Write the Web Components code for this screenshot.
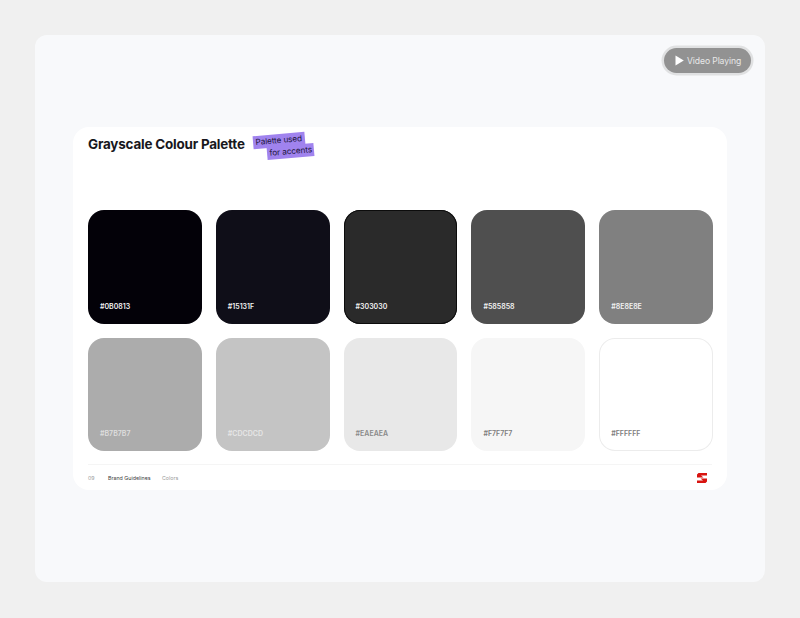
<!DOCTYPE html>
<html>
<head>
<meta charset="utf-8">
<style>
  html, body { margin: 0; height: 100%; background: #f0f0f0; }
  body { font-family: "Inter", "Liberation Sans", sans-serif; }
</style>
</head>
<body>
<guide-slide>
  <video-pill slot="top">Video Playing</video-pill>
  <palette-card>
    <span slot="title">Grayscale Colour Palette</span>
    <accent-note slot="note"></accent-note>
    <color-swatch color="#030108" label="#0B0813" ink="#f2f2f2"></color-swatch>
    <color-swatch color="#0f0e18" label="#15131F" ink="#f2f2f2"></color-swatch>
    <color-swatch color="#2a2a2a" label="#303030" ink="#f2f2f2" edge="#0c0c0c"></color-swatch>
    <color-swatch color="#4f4f4f" label="#585858" ink="#f2f2f2"></color-swatch>
    <color-swatch color="#808080" label="#8E8E8E" ink="#f2f2f2"></color-swatch>
    <color-swatch color="#acacac" label="#B7B7B7" ink="#dedede"></color-swatch>
    <color-swatch color="#c4c4c4" label="#CDCDCD" ink="#e6e6e6"></color-swatch>
    <color-swatch color="#e8e8e8" label="#EAEAEA" ink="#8a8a8a"></color-swatch>
    <color-swatch color="#f6f6f6" label="#F7F7F7" ink="#7d7d7d"></color-swatch>
    <color-swatch color="#ffffff" label="#FFFFFF" ink="#7d7d7d" edge="#ececec"></color-swatch>
    <card-footer slot="footer"></card-footer>
  </palette-card>
</guide-slide>

<script>
class GuideSlide extends HTMLElement {
  constructor() {
    super()
    this.attachShadow({ mode: 'open' }).innerHTML = `
      <style>
        :host { display: block; box-sizing: border-box; width: 800px; height: 618px; padding: 35px; }
        .panel {
          box-sizing: border-box; height: 547px; padding: 13px 14px 0 38px;
          background: #f8f9fb; border-radius: 12px;
          display: flex; flex-direction: column;
        }
        .top { display: flex; justify-content: flex-end; height: 79px; }
        .content { padding-right: 24px; }
      </style>
      <div class="panel">
        <div class="top"><slot name="top"></slot></div>
        <div class="content"><slot></slot></div>
      </div>`
  }
}

class VideoPill extends HTMLElement {
  constructor() {
    super()
    this.attachShadow({ mode: 'open' }).innerHTML = `
      <style>
        :host {
          display: flex; align-items: center; gap: 3px; box-sizing: border-box;
          height: 25px; width: 87px; padding-left: 11px;
          background: #929292; border-radius: 13px; color: #e8e8e8;
          font-size: 8.6px; letter-spacing: -0.1px;
          box-shadow: 0 0 0 2.5px #e0e1e2;
        }
        svg { display: block; flex: none; }
      </style>
      <svg width="9" height="11" viewBox="0 0 9 11"><path d="M0.5 0.5 L8.8 5.5 L0.5 10.5 Z" fill="#fff"/></svg>
      <slot></slot>`
  }
}

class PaletteCard extends HTMLElement {
  constructor() {
    super()
    this.attachShadow({ mode: 'open' }).innerHTML = `
      <style>
        :host { display: block; box-sizing: border-box; width: 654px; height: 363px; background: #fff; border-radius: 16px; padding: 0 15px; }
        header { display: flex; align-items: flex-start; gap: 8px; height: 83px; padding-top: 7px; box-sizing: border-box; }
        .title { font-size: 13.45px; font-weight: 700; letter-spacing: -0.2px; line-height: 20px; color: #17171c; white-space: nowrap; }
        .grid { display: grid; grid-template-columns: repeat(5, 113.8px); grid-auto-rows: 113.6px; column-gap: 14px; row-gap: 14px; }
      </style>
      <header>
        <div class="title"><slot name="title"></slot></div>
        <slot name="note"></slot>
      </header>
      <div class="grid"><slot></slot></div>
      <slot name="footer"></slot>`
  }
}

class AccentNote extends HTMLElement {
  constructor() {
    super()
    this.attachShadow({ mode: 'open' }).innerHTML = `
      <style>
        :host { display: block; width: 64px; font-size: 8.2px; letter-spacing: -0.1px; color: #1d1640; }
        span { display: block; width: max-content; background: #a083ee; padding: 0 2.5px; height: 13px; line-height: 13px; transform: rotate(-5deg); }
        .b { margin-left: 14px; margin-top: -2px; }
      </style>
      <span class="a">Palette used</span>
      <span class="b">for accents</span>`
  }
}

class ColorSwatch extends HTMLElement {
  constructor() {
    super()
    const edge = this.getAttribute('edge')
    this.attachShadow({ mode: 'open' }).innerHTML = `
      <style>
        :host {
          display: flex; align-items: flex-end; box-sizing: border-box;
          background: ${this.getAttribute('color')}; border-radius: 16px;
          padding: 0 0 12px 12px; font-size: 7px; font-weight: 600; line-height: 10px;
          color: ${this.getAttribute('ink')};
          ${edge ? `box-shadow: inset 0 0 0 1px ${edge};` : ''}
        }
      </style>
      <span>${this.getAttribute('label')}</span>`
  }
}

class CardFooter extends HTMLElement {
  constructor() {
    super()
    this.attachShadow({ mode: 'open' }).innerHTML = `
      <style>
        :host {
          display: flex; align-items: center; box-sizing: border-box; height: 26px; margin-top: 13px;
          border-top: 1px solid #f5f5f5; font-size: 5.3px; color: #9a9a9a;
        }
        .page { width: 20px; }
        .section { width: 54px; color: #3c3c3c; }
        svg { margin-left: auto; display: block; margin-right: 5px; }
      </style>
      <span class="page">09</span>
      <span class="section">Brand Guidelines</span>
      <span>Colors</span>
      <svg width="10" height="10" viewBox="0 0 10 10">
        <path d="M1.5 0 H10 V2.6 H4 L6.5 4.4 H0 V1.5 Z M3.5 5.6 H10 V8.5 L8.5 10 H0 V7.4 H6 Z" fill="#d81410"/>
      </svg>`
  }
}

customElements.define('guide-slide', GuideSlide)
customElements.define('video-pill', VideoPill)
customElements.define('palette-card', PaletteCard)
customElements.define('accent-note', AccentNote)
customElements.define('color-swatch', ColorSwatch)
customElements.define('card-footer', CardFooter)
</script>
</body>
</html>
